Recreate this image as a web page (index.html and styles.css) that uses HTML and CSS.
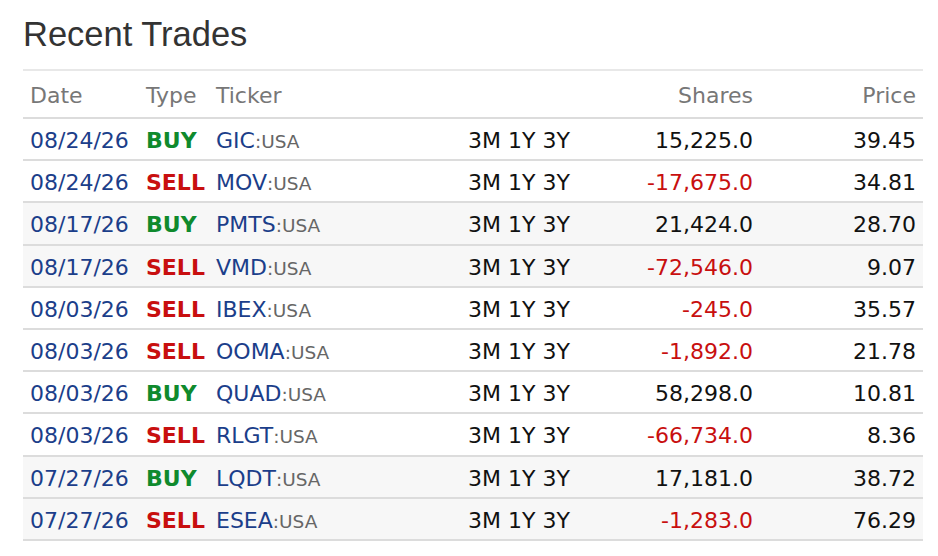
FILE: index.html
```html
<!DOCTYPE html>
<html>
<head>
<meta charset="utf-8">
<link rel="stylesheet" href="styles.css">
</head>
<body>
<div class="panel">
  <h1 class="title">Recent Trades</h1>
  <table class="trades">
    <colgroup>
      <col class="c-date"><col class="c-type"><col class="c-ticker"><col class="c-charts"><col class="c-shares"><col class="c-price">
    </colgroup>
    <thead>
      <tr><th>Date</th><th>Type</th><th>Ticker</th><th></th><th class="num">Shares</th><th class="num">Price</th></tr>
    </thead>
    <tbody>
      <tr><td class="date">08/24/26</td><td class="buy">BUY</td><td class="ticker">GIC<span class="mkt">:USA</span></td><td class="charts">3M 1Y 3Y</td><td class="num">15,225.0</td><td class="num">39.45</td></tr>
      <tr><td class="date">08/24/26</td><td class="sell">SELL</td><td class="ticker">MOV<span class="mkt">:USA</span></td><td class="charts">3M 1Y 3Y</td><td class="num neg">-17,675.0</td><td class="num">34.81</td></tr>
      <tr class="shade"><td class="date">08/17/26</td><td class="buy">BUY</td><td class="ticker">PMTS<span class="mkt">:USA</span></td><td class="charts">3M 1Y 3Y</td><td class="num">21,424.0</td><td class="num">28.70</td></tr>
      <tr class="shade"><td class="date">08/17/26</td><td class="sell">SELL</td><td class="ticker">VMD<span class="mkt">:USA</span></td><td class="charts">3M 1Y 3Y</td><td class="num neg">-72,546.0</td><td class="num">9.07</td></tr>
      <tr><td class="date">08/03/26</td><td class="sell">SELL</td><td class="ticker">IBEX<span class="mkt">:USA</span></td><td class="charts">3M 1Y 3Y</td><td class="num neg">-245.0</td><td class="num">35.57</td></tr>
      <tr><td class="date">08/03/26</td><td class="sell">SELL</td><td class="ticker">OOMA<span class="mkt">:USA</span></td><td class="charts">3M 1Y 3Y</td><td class="num neg">-1,892.0</td><td class="num">21.78</td></tr>
      <tr><td class="date">08/03/26</td><td class="buy">BUY</td><td class="ticker">QUAD<span class="mkt">:USA</span></td><td class="charts">3M 1Y 3Y</td><td class="num">58,298.0</td><td class="num">10.81</td></tr>
      <tr><td class="date">08/03/26</td><td class="sell">SELL</td><td class="ticker">RLGT<span class="mkt">:USA</span></td><td class="charts">3M 1Y 3Y</td><td class="num neg">-66,734.0</td><td class="num">8.36</td></tr>
      <tr class="shade"><td class="date">07/27/26</td><td class="buy">BUY</td><td class="ticker">LQDT<span class="mkt">:USA</span></td><td class="charts">3M 1Y 3Y</td><td class="num">17,181.0</td><td class="num">38.72</td></tr>
      <tr class="shade"><td class="date">07/27/26</td><td class="sell">SELL</td><td class="ticker">ESEA<span class="mkt">:USA</span></td><td class="charts">3M 1Y 3Y</td><td class="num neg">-1,283.0</td><td class="num">76.29</td></tr>
    </tbody>
  </table>
</div>
</body>
</html>
```

FILE: styles.css
```css
html, body {
  margin: 0;
  padding: 0;
  background: #ffffff;
}

.panel {
  padding: 14px 15px 0 23px;
}

.title {
  margin: 0 0 15px 0;
  font-family: "Liberation Sans", Arial, sans-serif;
  font-weight: normal;
  font-size: 34.5px;
  line-height: 40px;
  color: #333333;
}

.trades {
  width: 900px;
  border-collapse: collapse;
  table-layout: fixed;
  font-family: "DejaVu Sans", Verdana, sans-serif;
  font-size: 22px;
  border-top: 2px solid #e8e8e8;
}

.c-date { width: 116px; }
.c-type { width: 70px; }
.c-ticker { width: 252px; }
.c-charts { width: 139px; }
.c-shares { width: 160px; }
.c-price { width: 163px; }

.trades th {
  font-weight: normal;
  color: #777777;
  text-align: left;
  line-height: 26px;
  padding: 12px 7px 8px 7px;
  border-bottom: 2px solid #dcdcdc;
  white-space: nowrap;
}

.trades td {
  line-height: 26px;
  height: 26px;
  padding: 9px 7px 5px 7px;
  border-bottom: 2px solid #dcdcdc;
  color: #111111;
  white-space: nowrap;
  vertical-align: middle;
}

.trades tbody tr {
  height: 42.2px;
}

.trades tr.shade td {
  background: #f7f7f7;
}

.trades .num {
  text-align: right;
}

.trades td.date {
  color: #1b3e8a;
}

.trades td.buy {
  color: #0f8a2d;
  font-weight: bold;
}

.trades td.sell {
  color: #c80f0f;
  font-weight: bold;
}

.trades td.ticker {
  color: #1b3e8a;
}

.trades .mkt {
  color: #666666;
  font-size: 18.5px;
  line-height: 1;
}

.trades td.charts {
  color: #111111;
}

.trades td.neg {
  color: #c80f0f;
}
```
